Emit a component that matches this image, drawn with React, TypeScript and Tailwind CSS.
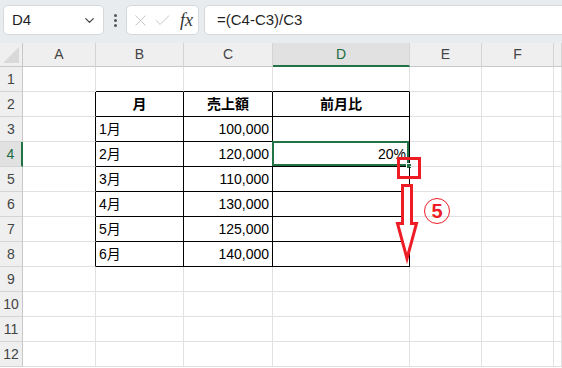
import { ChevronDown, X, Check } from "lucide-react";

const font = "font-['Liberation_Sans','Noto_Sans_CJK_JP',sans-serif]";

const columns = ["A", "B", "C", "D", "E", "F", "G"];

type Cell = { text: string; align?: "left" | "right" | "center"; bold?: boolean };

const data: Record<number, Cell[]> = {
  2: [
    { text: "月", align: "center", bold: true },
    { text: "売上額", align: "center", bold: true },
    { text: "前月比", align: "center", bold: true },
  ],
  3: [{ text: "1月" }, { text: "100,000", align: "right" }, { text: "" }],
  4: [{ text: "2月" }, { text: "120,000", align: "right" }, { text: "20%", align: "right" }],
  5: [{ text: "3月" }, { text: "110,000", align: "right" }, { text: "" }],
  6: [{ text: "4月" }, { text: "130,000", align: "right" }, { text: "" }],
  7: [{ text: "5月" }, { text: "125,000", align: "right" }, { text: "" }],
  8: [{ text: "6月" }, { text: "140,000", align: "right" }, { text: "" }],
};

function FormulaBar() {
  return (
    <div className="flex items-start h-[43px] pt-[5px] pl-[3px] bg-[#e9ecef] gap-0 overflow-hidden">
      <div className="w-[101px] h-[30px] shrink-0 flex items-center justify-between pl-[8px] pr-[6px] bg-white border border-[#d6d9dc] rounded-[5px]">
        <span className="text-[15px] text-[#1f1f1f]">D4</span>
        <ChevronDown size={15} strokeWidth={2} className="text-[#444]" />
      </div>
      <div className="w-[22px] h-[30px] shrink-0 flex flex-col items-center justify-center gap-[2px]">
        <span className="w-[3px] h-[3px] rounded-full bg-[#555]" />
        <span className="w-[3px] h-[3px] rounded-full bg-[#555]" />
        <span className="w-[3px] h-[3px] rounded-full bg-[#555]" />
      </div>
      <div className="w-[73px] h-[30px] shrink-0 flex items-center pl-[4px] gap-[3px] bg-white border border-[#d6d9dc] rounded-[5px]">
        <X size={19} strokeWidth={1.2} className="text-[#c4c4c4]" />
        <Check size={19} strokeWidth={1.2} className="text-[#c4c4c4]" />
        <span className="ml-[5px] font-['Liberation_Serif',serif] italic text-[18px] text-[#333]">fx</span>
      </div>
      <div className="ml-[5px] w-[380px] h-[30px] shrink-0 flex items-center pl-[12px] bg-white border border-[#d6d9dc] rounded-l-[5px]">
        <span className="text-[15px] text-[#1f1f1f]">=(C4-C3)/C3</span>
      </div>
    </div>
  );
}

function Grid() {
  const rows = Array.from({ length: 12 }, (_, i) => i + 1);
  return (
    <div className="grid grid-cols-[23px_73px_88px_89px_137px_72px_72px_1fr] text-[14px] text-black">
      <div className="h-[24px] bg-[#efefef] border-r border-b border-[#c8c8c8] relative overflow-hidden">
        <div className="absolute right-[3px] bottom-[3px] w-0 h-0 border-l-[16px] border-l-transparent border-b-[16px] border-b-[#d9d9d9]" />
      </div>
      {columns.map((c) =>
        c === "D" ? (
          <div
            key={c}
            className="h-[24px] bg-[#e1e1e1] border-r border-r-[#d4d4d4] border-b-2 border-b-[#217346] flex items-center justify-center text-[#1d6b40]"
          >
            {c}
          </div>
        ) : (
          <div
            key={c}
            className="h-[24px] bg-[#efefef] border-r border-r-[#d4d4d4] border-b border-b-[#c8c8c8] flex items-center justify-center text-[#444]"
          >
            {c === "G" ? "" : c}
          </div>
        )
      )}
      {rows.map((r) => (
        <Row key={r} r={r} />
      ))}
    </div>
  );
}

function Row({ r }: { r: number }) {
  const cells = data[r];
  return (
    <>
      {r === 4 ? (
        <div className="h-[25px] bg-[#e1e1e1] border-r-2 border-r-[#217346] border-b border-b-[#d4d4d4] flex items-center justify-center text-[#1d6b40]">
          {r}
        </div>
      ) : (
        <div className="h-[25px] bg-[#efefef] border-r border-r-[#c8c8c8] border-b border-b-[#d4d4d4] flex items-center justify-center text-[#444]">
          {r}
        </div>
      )}
      {columns.map((c, ci) => {
        const inTable = ci >= 1 && ci <= 3;
        const rightBlack = r >= 2 && r <= 8 && ci <= 3;
        const bottomBlack = inTable && r <= 8;
        const cell = inTable && cells ? cells[ci - 1] : undefined;
        const align =
          cell?.align === "right"
            ? "justify-end pr-[3px]"
            : cell?.align === "center"
            ? "justify-center"
            : "justify-start pl-[3px]";
        return (
          <div
            key={c}
            className={`h-[25px] relative flex items-center whitespace-nowrap border-r border-b ${align} ${
              rightBlack ? "border-r-black" : "border-r-[#e1e1e1]"
            } ${bottomBlack ? "border-b-black" : "border-b-[#e1e1e1]"} ${cell?.bold ? "font-bold" : ""}`}
          >
            {cell?.text}
            {r === 4 && c === "D" && (
              <>
                <div className="absolute -left-px -top-px right-0 bottom-0 border-2 border-[#217346]" />
                <div className="absolute -right-[3px] -bottom-[3px] w-[6px] h-[6px] bg-[#217346] border border-white" />
              </>
            )}
          </div>
        );
      })}
    </>
  );
}

export default function App() {
  return (
    <div className={`relative w-[562px] h-[368px] overflow-hidden bg-white ${font}`}>
      <FormulaBar />
      <Grid />
      <svg className="absolute inset-0 pointer-events-none" width={562} height={368}>
        <rect x={398.5} y={158.5} width={21} height={19} fill="none" stroke="#ee1c25" strokeWidth={3} />
        <polygon
          points="402.5,185.5 411.5,185.5 411.5,223.5 416.5,223.5 407,258.5 397.5,223.5 402.5,223.5"
          fill="white"
          stroke="#ee1c25"
          strokeWidth={3}
          strokeLinejoin="miter"
        />
      </svg>
      <div className="absolute left-[424px] top-[198px] w-[26px] h-[26px] rounded-full border-[1.5px] border-[#ee1c25] flex items-center justify-center text-[#ee1c25] text-[20px] font-bold leading-none">
        5
      </div>
    </div>
  );
}
